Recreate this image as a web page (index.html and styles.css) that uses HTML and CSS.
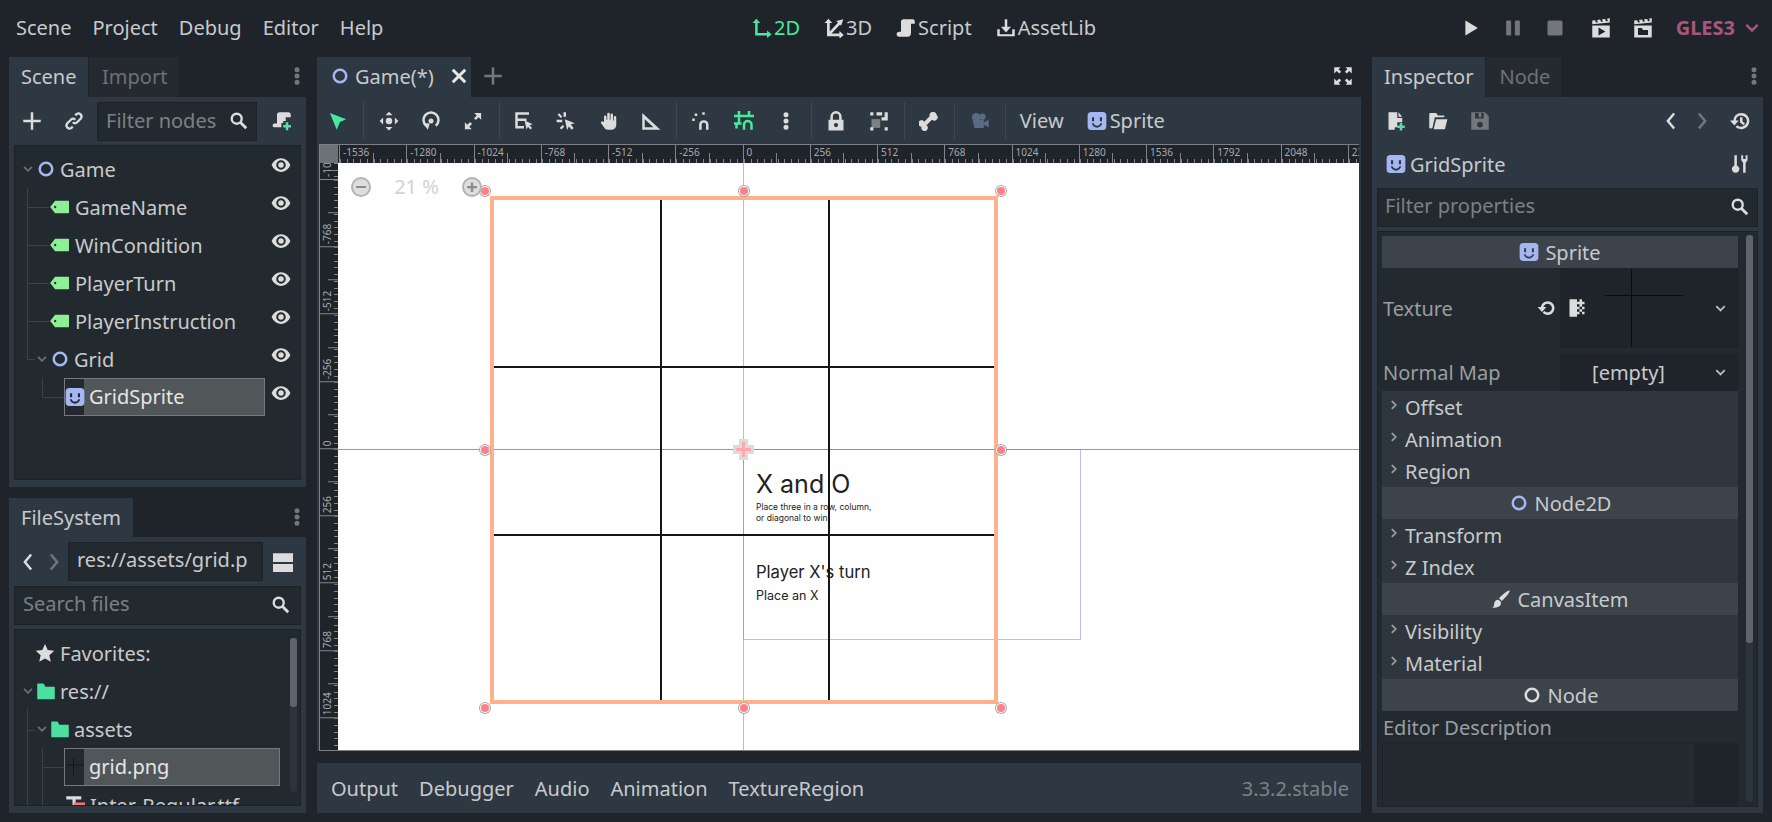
FILE: index.html
```html
<!DOCTYPE html>
<html lang="en">
<head>
  <meta charset="UTF-8">
  <title>Godot Engine - Game</title>
  <link rel="stylesheet" href="styles.css">
</head>
<body>

  <!-- icon set -->
  <svg class="sprites" xmlns="http://www.w3.org/2000/svg">
    <symbol id="eye" viewBox="0 0 16 16"><path fill-rule="evenodd" d="M8 2.500C4.500 2.500 1.700 5 .5 8c1.200 3 4 5.500 7.500 5.500s6.300-2.500 7.500-5.500C14.300 5 11.500 2.500 8 2.500zm0 1.700a3.800 3.800 0 110 7.600 3.800 3.800 0 010-7.600z"/><circle cx="8" cy="8" r="2.200"/></symbol>
    <symbol id="ring" viewBox="0 0 16 16"><circle cx="8" cy="8" r="5" fill="none" stroke="currentColor" stroke-width="2"/></symbol>
    <symbol id="tag" viewBox="0 0 16 16"><path fill-rule="evenodd" d="M.5 8L4.500 3H15a.6.6 0 01.6.6v8.800a.6.6 0 01-.6.6H4.500zM5 7.200a.9.9 0 100 1.600.9.9 0 000-1.600z"/></symbol>
    <symbol id="sprite" viewBox="0 0 16 16"><path fill-rule="evenodd" d="M3.500.8h9a3 3 0 013 3v8.400a3 3 0 01-3 3h-9a3 3 0 01-3-3V3.800a3 3 0 013-3zM4 5v3.200h1.700V5zm6.300 0v3.200H12V5zM3.800 10c.8 2.200 2.300 3.300 4.200 3.300s3.400-1.100 4.200-3.300l-1.300-.4C10.300 11 9.300 11.800 8 11.800S5.700 11 5.100 9.600z"/></symbol>
    <symbol id="folder" viewBox="0 0 16 16"><path d="M1.500 2H6l1.500 2.500h7a.5.5 0 01.5.5v9a.5.5 0 01-.5.5h-13A.5.5 0 011 14V2.500a.5.5 0 01.5-.5z"/></symbol>
    <symbol id="down" viewBox="0 0 16 16"><path d="M3.500 5.500L8 10l4.500-4.500" fill="none" stroke="currentColor" stroke-width="2"/></symbol>
    <symbol id="right" viewBox="0 0 16 16"><path d="M5.500 3.500L10 8l-4.500 4.500" fill="none" stroke="currentColor" stroke-width="2"/></symbol>
    <symbol id="back" viewBox="0 0 16 16"><path d="M10.500 2L5.500 8l5 6" fill="none" stroke="currentColor" stroke-width="2"/></symbol>
    <symbol id="forward" viewBox="0 0 16 16"><path d="M5.500 2l5 6-5 6" fill="none" stroke="currentColor" stroke-width="2"/></symbol>
    <symbol id="search" viewBox="0 0 16 16"><circle cx="6.500" cy="6.500" r="4.200" fill="none" stroke="currentColor" stroke-width="2"/><path d="M9.500 9.500L14.500 14.500" stroke="currentColor" stroke-width="2.400"/></symbol>
    <symbol id="plus" viewBox="0 0 16 16"><path d="M7 1h2v6h6v2H9v6H7V9H1V7h6z"/></symbol>
    <symbol id="link" viewBox="0 0 16 16"><path d="M9 3.500l1-1a2.500 2.500 0 013.500 3.500l-3 3a2.500 2.500 0 01-3.500 0M7 12.500l-1 1A2.500 2.500 0 012.500 10l3-3A2.500 2.500 0 019 7" fill="none" stroke="currentColor" stroke-width="1.800"/></symbol>
    <symbol id="instance" viewBox="0 0 16 16"><path d="M6 1h7a2 2 0 012 2v2h-4v3H9v1.500H7.500V13H2a1.500 1.500 0 010-3h2V3a2 2 0 012-2z"/><path fill="#57e0a0" d="M11 9h2v2.200h2.200v2H13v2.200h-2v-2.200H9v-2h2z"/></symbol>
    <symbol id="dots" viewBox="0 0 16 16"><circle cx="8" cy="3" r="2"/><circle cx="8" cy="8" r="2"/><circle cx="8" cy="13" r="2"/></symbol>
    <symbol id="cross" viewBox="0 0 16 16"><path d="M3 3l10 10M13 3L3 13" stroke="currentColor" stroke-width="2.400"/></symbol>
    <symbol id="star" viewBox="0 0 16 16"><path d="M8 .8l2.200 4.800 5.200.6-3.900 3.500 1.100 5.200L8 12.300 3.400 14.900l1.100-5.200L.6 6.200l5.200-.6z"/></symbol>
    <symbol id="split" viewBox="0 0 16 16"><path d="M0 1h16v7H0zM0 9.500h16V16H0z"/></symbol>
    <symbol id="axes2d" viewBox="0 0 16 16"><path d="M3.500.5L.4 4h2.100v10H12v2l3.600-3L12 10v2H4.500V4h2.100z"/></symbol>
    <symbol id="axes3d" viewBox="0 0 16 16"><path d="M3.500 3v10.500h9.500M3.500 13.500L12.500 4" fill="none" stroke="currentColor" stroke-width="2.200"/><path d="M3.500.5L.4 4h6.200zM15.500 1L9.800 2.300l3.900 3.900zM15.800 13.500L12.300 10.400v6.200z"/></symbol>
    <symbol id="script" viewBox="0 0 16 16"><path d="M6 1h7.500c1 0 1.500.8 1.500 1.800v1.700h-3V12c0 1.700-1 3-2.500 3H2.500C1.200 15 .5 14 .5 13c0-1.200.8-2 2-2H4V3c0-1.200.8-2 2-2z"/></symbol>
    <symbol id="assetlib" viewBox="0 0 16 16"><path d="M7 1h2v6h3l-4 4.500L4 7h3zM1 9h2v4h10V9h2v5.500H1z"/></symbol>
    <symbol id="play" viewBox="0 0 16 16"><path d="M3.500 2v12l10-6z"/></symbol>
    <symbol id="pause" viewBox="0 0 16 16"><rect x="2.500" y="2" width="4" height="12" rx="1"/><rect x="9.500" y="2" width="4" height="12" rx="1"/></symbol>
    <symbol id="stop" viewBox="0 0 16 16"><rect x="2" y="2" width="12" height="12" rx="1.500"/></symbol>
    <symbol id="clap-play" viewBox="0 0 16 16"><path fill-rule="evenodd" d="M1 2l2.300-.3.700 1.800 1.500-.2-.7-1.800 2.500-.3.700 1.800 1.500-.2-.7-1.800 2.500-.3.700 1.800 1.500-.2-.7-1.800L15 0v3.500L1 5zM1 6h14v9.500H1zm5 1.500v6.500l5.500-3.200z"/></symbol>
    <symbol id="clap-scene" viewBox="0 0 16 16"><path fill-rule="evenodd" d="M1 2l2.300-.3.700 1.800 1.500-.2-.7-1.800 2.500-.3.700 1.800 1.500-.2-.7-1.800 2.500-.3.700 1.800 1.500-.2-.7-1.800L15 0v3.500L1 5zM1 6h14v9.500H1zm3 2v5.500h8V9.500H8L7 8z"/></symbol>
    <symbol id="cursor" viewBox="0 0 16 16"><path d="M1.500 1.500l13 5-5 2.200L7 15z"/></symbol>
    <symbol id="move" viewBox="0 0 16 16"><path d="M8 .5l2.800 2.800H5.200zM8 15.500l-2.800-2.800h5.600zM.5 8l2.800-2.800v5.600zM15.500 8l-2.800 2.800V5.200z"/><circle cx="8" cy="8" r="2.600"/></symbol>
    <symbol id="rotate" viewBox="0 0 16 16"><path d="M4.200 11.800a6 6 0 117.600 0" fill="none" stroke="currentColor" stroke-width="2"/><path d="M1.500 9.500l5.500.5-1.500 5z"/><circle cx="8" cy="8" r="2"/></symbol>
    <symbol id="scale" viewBox="0 0 16 16"><path d="M1.500 9v5.500H7l-2-2 2.200-2.200-1.500-1.500L3.500 11zM14.500 7V1.500H9l2 2-2.200 2.200 1.500 1.500L12.500 5z"/></symbol>
    <symbol id="list" viewBox="0 0 16 16"><path d="M1 1h11v2H3v3h7v2H3v4h5v2H1z"/><path d="M8.500 7.500l6.500 3-2.600.8 2 2.200-1.300 1.200-1.900-2.200-1.200 2.300z"/></symbol>
    <symbol id="pivot" viewBox="0 0 16 16"><path d="M.5 7h4.500v2H.5zM6 1h2v3.500H6zM2.500 1.800l2.500 2.500L3.800 5.500 1.300 3zM5.500 11l-2.500 2.500 1.300 1.200L6.500 12.500z"/><path d="M7 6.500l8 3.300-3.200 1 2.300 2.700-1.600 1.500-2.200-2.700-1.400 2.800z"/></symbol>
    <symbol id="hand" viewBox="0 0 16 16"><path d="M4 8.500V4.500a1 1 0 012 0V7h.6V2.300a1 1 0 012 0V7h.6V3a1 1 0 012 0v4.500h.6V5a1 1 0 012 0v6c0 2.300-1.500 4-3.800 4H7c-1.500 0-2.300-.7-3-2L1.700 9.800a1 1 0 011.500-1.300z"/></symbol>
    <symbol id="ruler" viewBox="0 0 16 16"><path fill-rule="evenodd" d="M1 1.500L15.500 15H1zM3 6.500V13h7z"/></symbol>
    <symbol id="snap" viewBox="0 0 16 16"><path d="M6.500 15v-4.500a3.800 3.800 0 017.500 0V15h-2v-4.500a1.800 1.800 0 00-3.500 0V15zM1 6h2v2H1zM3 2h2v2H3zM9 1h2v2H9z"/></symbol>
    <symbol id="gridsnap" viewBox="0 0 16 16"><path d="M3 0h2v3h6V0h2v3h3v2H0V3h3zM0 9h6v2H3v3H1v-3H0zM7 15v-4a4 4 0 018 0v4h-2v-4a2 2 0 00-4 0v4z"/><path d="M3 5h2v5H3z"/></symbol>
    <symbol id="lock" viewBox="0 0 16 16"><path fill-rule="evenodd" d="M8 0a4.500 4.500 0 00-4.500 4.500V7H2v8.500h12V7h-1.500V4.500A4.500 4.500 0 008 0zm0 2a2.500 2.500 0 012.500 2.500V7h-5V4.500A2.500 2.500 0 018 2zm0 7.500a1.700 1.700 0 110 3.400 1.700 1.700 0 010-3.400z"/></symbol>
    <symbol id="group" viewBox="0 0 16 16"><path opacity=".45" d="M2 6.500h7v7H2z"/><path d="M1 1h2.500v2.500H1zM12.500 1H15v6.500h-5V5h2.500zM1 13h2.500v2.500H1zM12.500 13H15v2.500h-2.500zM6 1h4.500v2.500H6z"/></symbol>
    <symbol id="bone" viewBox="0 0 16 16"><path d="M11 .8a2.600 2.600 0 00-2.500 3.400L4.200 8.500A2.600 2.600 0 102 12.500a2.600 2.600 0 104-1.200l4.300-4.300A2.600 2.600 0 1014 3a2.600 2.600 0 00-3-2.200z"/></symbol>
    <symbol id="camera" viewBox="0 0 16 16"><circle cx="5" cy="5" r="3.500"/><circle cx="10" cy="4.500" r="2.500"/><path d="M2 7h9v6.500H3.500zM11 9l4-2v6l-4-2z"/></symbol>
    <symbol id="full" viewBox="0 0 16 16"><path d="M1 1h5L4.500 2.500l2 2L5 6 3 4 1 6zM15 1v5l-2-2-2 2-1.500-1.500 2-2L10 1zM1 15v-5l2 2 2-2 1.500 1.500-2 2L6 15zM15 15h-5l1.500-1.500-2-2L11 10l2 2 2-2z"/></symbol>
    <symbol id="doc-new" viewBox="0 0 16 16"><path d="M2 1h7v4.500h4V9H9v4H7v2H2zM10 1l3 3.500h-3z"/><path fill="#57e0a0" d="M11 9.500h2v2h2v2h-2v2h-2v-2H9v-2h2z"/></symbol>
    <symbol id="open" viewBox="0 0 16 16"><path fill-rule="evenodd" d="M2 1.500h4.500L8 3.500h5V5H5.500L3.500 13.500 2.500 14H2a1 1 0 01-1-1V2.500a1 1 0 011-1zM6.500 6.500H15.500L13.500 14.500H4.500z"/></symbol>
    <symbol id="save" viewBox="0 0 16 16"><path fill-rule="evenodd" d="M1.500 1H12l3 3v10.500a.5.5 0 01-.5.5h-13a.5.5 0 01-.5-.5v-13a.5.500 0 01.5-.5zM4 1.500V6h7V1.500H9V5H7V1.500zM8 8.500a2.300 2.300 0 100 4.600 2.300 2.300 0 000-4.600z"/></symbol>
    <symbol id="history" viewBox="0 0 16 16"><path d="M9 1.500a6.500 6.500 0 11-4.500 11.200l1.400-1.400A4.500 4.500 0 109 3.500 4.500 4.500 0 004.600 7.500H7l-3.500 4-3.500-4h2.600A6.500 6.500 0 019 1.500z"/><path d="M8 5h2v3.300l2 1.500-1.100 1.500L8 9.200z"/></symbol>
    <symbol id="tools" viewBox="0 0 16 16"><path d="M3.500 1h2v8.200a3 3 0 11-2 0zM9 1h1.500v3h2V1H14v4l-1.500 2v8H10.500V7L9 5z"/></symbol>
    <symbol id="revert" viewBox="0 0 16 16"><path d="M8.500 2.500a5.500 5.500 0 11-4 9.300l1.400-1.400A3.500 3.500 0 108.500 4.500a3.500 3.500 0 00-3.300 2.700h2.300l-3.500 4-3.500-4h2.600a5.500 5.500 0 015.400-4.700z"/></symbol>
    <symbol id="texture" viewBox="0 0 16 16"><path d="M2 1h6v2h2V1h2v2h2v2h-2v2h2v2h-2v2h2v2h-2v-2h-2v2H8v2H2zM8 5v2h2V5zm2 2v2H8v2h2V9h2V7zM5 11l2-3 1 3z"/></symbol>
    <symbol id="brush" viewBox="0 0 16 16"><path d="M15 1.200c.6.600-2.500 5-6.300 8.300L6.400 7.300C9.800 3.600 14.300.6 15 1.200zM5.500 8.500c1.500.2 2.500 1.300 2.500 2.700C8 13.400 6 15 1 15c1.500-1 1.500-2 1.500-3 0-2 1.500-3.500 3-3.500z"/></symbol>
    <symbol id="thumb" viewBox="0 0 16 16"><path d="M1 6h14v.6H1zM6.500 1h.6v14h-.6z"/></symbol>
    <symbol id="font" viewBox="0 0 16 16"><path d="M1 1h12v2.500H8.500V14H6V3.500H1z"/><path fill="#ff7070" d="M7 6h9v2.500h-3V16h-2.500V8.500H7z"/></symbol>
  </svg>

  <div class="editor">

    <header class="topbar">
      <nav class="menu">
        <span>Scene</span><span>Project</span><span>Debug</span><span>Editor</span><span>Help</span>
      </nav>
      <nav class="modes">
        <span class="mode active"><svg class="ic"><use href="#axes2d"/></svg>2D</span>
        <span class="mode"><svg class="ic"><use href="#axes3d"/></svg>3D</span>
        <span class="mode"><svg class="ic"><use href="#script"/></svg>Script</span>
        <span class="mode"><svg class="ic"><use href="#assetlib"/></svg>AssetLib</span>
      </nav>
      <div class="runbar">
        <svg class="ic"><use href="#play"/></svg>
        <svg class="ic dim"><use href="#pause"/></svg>
        <svg class="ic dim"><use href="#stop"/></svg>
        <svg class="ic clap-first"><use href="#clap-play"/></svg>
        <svg class="ic"><use href="#clap-scene"/></svg>
        <span class="driver">GLES3</span>
        <svg class="ic driver-arrow"><use href="#down"/></svg>
      </div>
    </header>

    <main class="workspace">

      <!-- left docks -->
      <section class="column-left">
        <div class="tabs">
          <span class="tab active tab-scene">Scene</span>
          <span class="tab tab-import">Import</span>
          <svg class="ic tab-dots"><use href="#dots"/></svg>
        </div>
        <div class="panel scene-panel">
          <div class="dock-tools">
            <svg class="ic tool-add"><use href="#plus"/></svg>
            <svg class="ic tool-link"><use href="#link"/></svg>
            <div class="input filter-nodes"><span>Filter nodes</span><svg class="ic"><use href="#search"/></svg></div>
            <svg class="ic tool-inst"><use href="#instance"/></svg>
          </div>
          <div class="tree scene-tree">
            <i class="guide guide-v1"></i>
            <i class="guide guide-h1"></i>
            <i class="guide guide-h2"></i>
            <i class="guide guide-h3"></i>
            <i class="guide guide-h4"></i>
            <i class="guide guide-h5"></i>
            <i class="guide guide-v2"></i>
            <i class="guide guide-h6"></i>
            <div class="row d0"><svg class="ic arrow"><use href="#down"/></svg><svg class="ic blue"><use href="#ring"/></svg><span>Game</span><svg class="ic eye"><use href="#eye"/></svg></div>
            <div class="row d1"><svg class="ic tag"><use href="#tag"/></svg><span>GameName</span><svg class="ic eye"><use href="#eye"/></svg></div>
            <div class="row d1"><svg class="ic tag"><use href="#tag"/></svg><span>WinCondition</span><svg class="ic eye"><use href="#eye"/></svg></div>
            <div class="row d1"><svg class="ic tag"><use href="#tag"/></svg><span>PlayerTurn</span><svg class="ic eye"><use href="#eye"/></svg></div>
            <div class="row d1"><svg class="ic tag"><use href="#tag"/></svg><span>PlayerInstruction</span><svg class="ic eye"><use href="#eye"/></svg></div>
            <div class="row d1 parent"><svg class="ic arrow"><use href="#down"/></svg><svg class="ic blue"><use href="#ring"/></svg><span>Grid</span><svg class="ic eye"><use href="#eye"/></svg></div>
            <div class="row d2"><div class="selected"><span class="sel-icon"><svg class="ic blue"><use href="#sprite"/></svg></span><span class="sel-text">GridSprite</span></div><svg class="ic eye"><use href="#eye"/></svg></div>
          </div>
        </div>

        <div class="tabs tabs-second">
          <span class="tab active tab-fs">FileSystem</span>
          <svg class="ic tab-dots"><use href="#dots"/></svg>
        </div>
        <div class="panel fs-panel">
          <div class="dock-tools fs-tools">
            <svg class="ic nav-back"><use href="#back"/></svg>
            <svg class="ic nav-fwd dim"><use href="#forward"/></svg>
            <div class="input path"><span>res://assets/grid.p</span></div>
            <svg class="ic split"><use href="#split"/></svg>
          </div>
          <div class="input search-files"><span>Search files</span><svg class="ic"><use href="#search"/></svg></div>
          <div class="tree fs-tree">
            <i class="guide fs-v1"></i>
            <i class="guide fs-h1"></i>
            <i class="guide fs-v2"></i>
            <i class="guide fs-h2"></i>
            <i class="guide fs-h3"></i>
            <div class="scroll"><b></b></div>
            <div class="row d0 fav"><svg class="ic"><use href="#star"/></svg><span>Favorites:</span></div>
            <div class="row d0"><svg class="ic arrow"><use href="#down"/></svg><svg class="ic folder"><use href="#folder"/></svg><span>res://</span></div>
            <div class="row d1 parent"><svg class="ic arrow"><use href="#down"/></svg><svg class="ic folder"><use href="#folder"/></svg><span>assets</span></div>
            <div class="row d2"><div class="selected wide"><span class="sel-icon"><svg class="ic thumb"><use href="#thumb"/></svg></span><span class="sel-text">grid.png</span></div></div>
            <div class="row d2 file"><svg class="ic"><use href="#font"/></svg><span>Inter-Regular.ttf</span></div>
          </div>
        </div>
      </section>

      <!-- main screen -->
      <section class="column-center">
        <div class="tabs scene-tabs">
          <span class="tab active tab-game"><svg class="ic blue"><use href="#ring"/></svg><span>Game(*)</span><svg class="ic close"><use href="#cross"/></svg></span>
          <svg class="ic add-tab"><use href="#plus"/></svg>
          <svg class="ic fullscreen"><use href="#full"/></svg>
        </div>
        <div class="panel main-panel">
          <div class="canvas-tools">
            <span class="btn on"><svg class="ic"><use href="#cursor"/></svg></span>
            <i class="sep"></i>
            <span class="btn"><svg class="ic"><use href="#move"/></svg></span>
            <span class="btn"><svg class="ic"><use href="#rotate"/></svg></span>
            <span class="btn"><svg class="ic"><use href="#scale"/></svg></span>
            <i class="sep"></i>
            <span class="btn"><svg class="ic"><use href="#list"/></svg></span>
            <span class="btn"><svg class="ic"><use href="#pivot"/></svg></span>
            <span class="btn"><svg class="ic"><use href="#hand"/></svg></span>
            <span class="btn"><svg class="ic"><use href="#ruler"/></svg></span>
            <i class="sep"></i>
            <span class="btn"><svg class="ic"><use href="#snap"/></svg></span>
            <span class="btn on"><svg class="ic"><use href="#gridsnap"/></svg></span>
            <span class="btn"><svg class="ic"><use href="#dots"/></svg></span>
            <i class="sep"></i>
            <span class="btn"><svg class="ic"><use href="#lock"/></svg></span>
            <span class="btn"><svg class="ic"><use href="#group"/></svg></span>
            <i class="sep"></i>
            <span class="btn"><svg class="ic"><use href="#bone"/></svg></span>
            <i class="sep"></i>
            <span class="btn cam"><svg class="ic"><use href="#camera"/></svg></span>
            <i class="sep"></i>
            <span class="text-btn view">View</span>
            <span class="text-btn sprite-btn"><svg class="ic blue"><use href="#sprite"/></svg>Sprite</span>
          </div>

          <div class="viewport">
            <div class="ruler-row">
              <div class="ruler-corner"></div>
              <div class="ruler-top">
                <span>-1536</span><span>-1280</span><span>-1024</span><span>-768</span><span>-512</span><span>-256</span><span>0</span><span>256</span><span>512</span><span>768</span><span>1024</span><span>1280</span><span>1536</span><span>1792</span><span>2048</span><span>2304</span>
              </div>
            </div>
            <div class="canvas-row">
              <div class="ruler-left">
                <span class="cut">-1024</span><span>-768</span><span>-512</span><span>-256</span><span>0</span><span>256</span><span>512</span><span>768</span><span>1024</span><span>1280</span>
              </div>
              <div class="canvas">
                <i class="axis-x"></i>
                <i class="axis-y"></i>
                <i class="axis-y-mix"></i>
                <i class="axis-x-mix"></i>
                <div class="label-frame"></div>

                <div class="game-text">
                  <div class="t-title">X and O</div>
                  <div class="t-small">Place three in a row, column,<br>or diagonal to win</div>
                  <div class="t-turn">Player X's turn</div>
                  <div class="t-place">Place an X</div>
                </div>

                <div class="grid-sprite">
                  <i class="line v1"></i><i class="line v2"></i>
                  <i class="line h1"></i><i class="line h2"></i>
                </div>

                <i class="handle hl vt"></i><i class="handle hc vt"></i><i class="handle hr vt"></i>
                <i class="handle hl vm"></i><i class="handle hr vm"></i>
                <i class="handle hl vb"></i><i class="handle hc vb"></i><i class="handle hr vb"></i>
                <div class="pivot-mark"></div>

                <div class="zoom-widget">
                  <span class="zoom-btn">&minus;</span>
                  <span class="zoom-val">21 %</span>
                  <span class="zoom-btn">+</span>
                </div>
              </div>
            </div>
          </div>
        </div>

        <footer class="bottom-panel">
          <span>Output</span><span>Debugger</span><span>Audio</span><span>Animation</span><span>TextureRegion</span>
          <em>3.3.2.stable</em>
        </footer>
      </section>

      <!-- inspector -->
      <section class="column-right">
        <div class="tabs">
          <span class="tab active tab-inspector">Inspector</span>
          <span class="tab tab-node">Node</span>
          <svg class="ic tab-dots"><use href="#dots"/></svg>
        </div>
        <div class="panel inspector-panel">
          <div class="insp-tools">
            <svg class="ic"><use href="#doc-new"/></svg>
            <svg class="ic"><use href="#open"/></svg>
            <svg class="ic dim"><use href="#save"/></svg>
            <svg class="ic push"><use href="#back"/></svg>
            <svg class="ic dim"><use href="#forward"/></svg>
            <svg class="ic"><use href="#history"/></svg>
          </div>
          <div class="insp-object">
            <svg class="ic blue"><use href="#sprite"/></svg>
            <span>GridSprite</span>
            <svg class="ic tools"><use href="#tools"/></svg>
          </div>
          <div class="input filter-props"><span>Filter properties</span><svg class="ic"><use href="#search"/></svg></div>
          <div class="insp-list">
            <div class="scroll insp-scroll"><b></b></div>
            <div class="cat"><svg class="ic blue"><use href="#sprite"/></svg>Sprite</div>
            <div class="prop prop-texture">
              <span class="prop-name">Texture</span>
              <svg class="ic revert"><use href="#revert"/></svg>
              <div class="prop-value">
                <svg class="ic tex-ic"><use href="#texture"/></svg>
                <i class="tex-v"></i><i class="tex-h"></i>
                <svg class="ic val-arrow"><use href="#down"/></svg>
              </div>
            </div>
            <div class="prop prop-normal">
              <span class="prop-name">Normal Map</span>
              <div class="prop-value">
                <span class="empty">[empty]</span>
                <svg class="ic val-arrow"><use href="#down"/></svg>
              </div>
            </div>
            <div class="sec"><svg class="ic"><use href="#right"/></svg>Offset</div>
            <div class="sec"><svg class="ic"><use href="#right"/></svg>Animation</div>
            <div class="sec"><svg class="ic"><use href="#right"/></svg>Region</div>
            <div class="cat"><svg class="ic blue"><use href="#ring"/></svg>Node2D</div>
            <div class="sec"><svg class="ic"><use href="#right"/></svg>Transform</div>
            <div class="sec"><svg class="ic"><use href="#right"/></svg>Z Index</div>
            <div class="cat"><svg class="ic"><use href="#brush"/></svg>CanvasItem</div>
            <div class="sec"><svg class="ic"><use href="#right"/></svg>Visibility</div>
            <div class="sec"><svg class="ic"><use href="#right"/></svg>Material</div>
            <div class="cat"><svg class="ic"><use href="#ring"/></svg>Node</div>
            <div class="prop-desc">Editor Description</div>
            <div class="desc-box"><div class="desc-side"></div></div>
          </div>
        </div>
      </section>

    </main>
  </div>

</body>
</html>
```

FILE: styles.css
```css
* {
  box-sizing: border-box;
}

html, body {
  margin: 0;
  height: 100%;
  overflow: hidden;
}

body {
  background-color: #1f242b;
  color: #c8cacc;
  font-family: "Noto Sans", sans-serif;
  font-size: 20px;
}

.sprites {
  display: none;
}

i {
  display: block;
}

.ic {
  width: 20px;
  height: 20px;
  fill: currentColor;
  color: #dcdcdc;
  flex: none;
}

.ic.dim {
  color: #73777b;
}

.ic.blue {
  color: #a5b7f3;
}

.ic.tag {
  color: #8eef97;
  width: 21px;
}

.ic.folder {
  color: #4be0a0;
}

.editor {
  height: 822px;
  display: flex;
  flex-direction: column;
}

/* Top bar */
.topbar {
  height: 57px;
  flex: none;
  display: flex;
  align-items: center;
  padding-bottom: 2px;
}

.menu {
  display: flex;
  gap: 21px;
  padding-left: 16px;
  width: 752px;
}

.modes {
  display: flex;
  gap: 24px;
}

.mode {
  display: flex;
  align-items: center;
  gap: 2px;
}

.mode.active, .mode.active .ic {
  color: #45ea9f;
}

.runbar {
  margin-left: auto;
  padding-right: 10px;
  display: flex;
  align-items: center;
  gap: 22px;
}

.clap-first {
  margin-left: 4px;
}

.driver {
  color: #a8567f;
  font-weight: 700;
  margin-left: 1px;
  margin-right: -15px;
}

.ic.driver-arrow {
  color: #a8567f;
}

/* Columns */
.workspace {
  flex: 1;
  display: flex;
  padding: 0 9px 9px;
  gap: 11px;
  min-height: 0;
}

.column-left {
  width: 297px;
  flex: none;
  display: flex;
  flex-direction: column;
}

.column-center {
  width: 1044px;
  flex: none;
  display: flex;
  flex-direction: column;
}

.column-right {
  width: 391px;
  flex: none;
  display: flex;
  flex-direction: column;
}

/* Tabs */
.tabs {
  height: 40px;
  flex: none;
  display: flex;
  position: relative;
}

.tabs-second {
  margin-top: 11px;
  height: 39px;
}

.tab {
  height: 100%;
  padding: 0 12px 2px;
  display: flex;
  align-items: center;
  background-color: #252a30;
  color: #6d7175;
  margin-right: 1px;
}

.tab.active {
  background-color: #2e3842;
  color: #c8cacc;
}

.tab-fs {
  padding-bottom: 0;
}

.tab-import {
  padding-left: 13px;
  width: 90px;
}

.tab-scene {
  width: 79px;
}

.tab-node {
  padding-left: 13px;
  width: 75px;
}

.tab-dots {
  position: absolute;
  right: -1px;
  top: 9px;
  color: #73777b;
}

.panel {
  background-color: #2e3842;
}

.input {
  background-color: #232a2f;
  border: 1px solid #1d2228;
  display: flex;
  align-items: center;
  color: #7c8084;
  padding-left: 8px;
  padding-bottom: 2px;
}

.input .ic {
  margin-left: auto;
  width: 19px;
  height: 19px;
}

/* Scene dock */
.scene-panel {
  height: 390px;
  padding: 0 5px;
  flex: none;
}

.dock-tools {
  height: 48px;
  display: flex;
  align-items: center;
}

.tool-add {
  margin-left: 8px;
}

.tool-link {
  margin-left: 22px;
}

.filter-nodes {
  width: 160px;
  height: 39px;
  margin-left: 13px;
  padding-right: 8px;
}

.tool-inst {
  margin-left: 15px;
}

.tree {
  background-color: #232a2f;
  border: 1px solid #1d2228;
  position: relative;
  overflow: hidden;
}

.scene-tree {
  height: 335px;
  padding-top: 4px;
}

.row {
  height: 38px;
  display: flex;
  align-items: center;
  white-space: nowrap;
}

.row .arrow {
  color: #6c7074;
  width: 14px;
  height: 14px;
}

.row.d0 {
  padding-left: 6px;
}

.row.d0 .arrow {
  margin-right: 1px;
}

.row.d0 .arrow + .ic {
  margin-right: 4px;
}

.row.d1 {
  padding-left: 34px;
}

.row.d1 .tag {
  margin-right: 5px;
}

.row.d1.parent {
  padding-left: 20px;
}

.row.d1.parent .arrow {
  margin-right: 1px;
}

.row.d1.parent .arrow + .ic {
  margin-right: 4px;
}

.row.d2 {
  padding-left: 49px;
}

.eye {
  position: absolute;
  right: 9px;
  margin-top: -8px;
}

.row .ic.eye {
  width: 20px;
  height: 20px;
}

.selected {
  display: flex;
  height: 38px;
  width: 201px;
  border: 1px solid #75797c;
  background-color: #515659;
  color: #e6e6e6;
}

.selected.wide {
  width: 216px;
}

.sel-icon {
  width: 19px;
  background-color: #232a2f;
  display: flex;
  align-items: center;
  justify-content: center;
}

.sel-text {
  padding-left: 5px;
  line-height: 36px;
}

.thumb {
  color: #111;
}

.guide {
  position: absolute;
  background-color: #3a4149;
}

.guide-v1 { left: 12px; top: 42px; width: 1px; height: 171px; }
.guide-h1 { left: 12px; top: 61px; width: 22px; height: 1px; }
.guide-h2 { left: 12px; top: 99px; width: 22px; height: 1px; }
.guide-h3 { left: 12px; top: 137px; width: 22px; height: 1px; }
.guide-h4 { left: 12px; top: 175px; width: 22px; height: 1px; }
.guide-h5 { left: 12px; top: 213px; width: 8px; height: 1px; }
.guide-v2 { left: 27px; top: 232px; width: 1px; height: 19px; }
.guide-h6 { left: 27px; top: 251px; width: 22px; height: 1px; }

/* FileSystem dock */
.fs-panel {
  flex: 1;
  min-height: 0;
  padding: 0 5px 7px;
  display: flex;
  flex-direction: column;
}

.fs-tools {
  height: 49px;
  flex: none;
}

.nav-back {
  margin-left: 4px;
}

.nav-fwd {
  margin-left: 6px;
}

.path {
  width: 195px;
  height: 39px;
  margin-left: 4px;
  color: #c8cacc;
  padding-left: 8px;
  padding-bottom: 4px;
  overflow: hidden;
  white-space: nowrap;
}

.split {
  margin-left: 10px;
  width: 20px;
  height: 20px;
}

.search-files {
  height: 39px;
  flex: none;
  padding-right: 10px;
  padding-bottom: 4px;
}

.search-files .ic {
  margin-top: 2px;
}

.fs-tree {
  flex: 1;
  margin-top: 4px;
  padding-top: 4px;
}

.row.fav {
  padding-left: 20px;
}

.fav .ic {
  margin-right: 5px;
}

.row.file {
  padding-left: 50px;
}

.file .ic {
  margin-right: 5px;
}

.scroll {
  position: absolute;
  right: 3px;
  top: 8px;
  width: 7px;
  height: 154px;
  background-color: #2c333a;
  border-radius: 3px;
}

.scroll b {
  display: block;
  height: 69px;
  background-color: #5d6368;
  border-radius: 3px;
}

.fs-v1 { left: 12px; top: 79px; width: 1px; height: 100px; }
.fs-h1 { left: 12px; top: 100px; width: 8px; height: 1px; }
.fs-v2 { left: 27px; top: 118px; width: 1px; height: 60px; }
.fs-h2 { left: 27px; top: 137px; width: 22px; height: 1px; }
.fs-h3 { left: 27px; top: 175px; width: 22px; height: 1px; }

/* Center */
.scene-tabs {
  align-items: stretch;
}

.tab-game {
  width: 154px;
  padding-left: 13px;
  gap: 5px;
  margin-right: 0;
}

.close {
  margin-left: 10px;
  color: #e8e8e8;
}

.add-tab {
  align-self: center;
  margin-left: 12px;
  margin-top: -2px;
  color: #73777b;
}

.fullscreen {
  align-self: center;
  margin-left: auto;
  margin-right: 8px;
  margin-top: -2px;
}

.main-panel {
  height: 654px;
  flex: none;
}

.canvas-tools {
  height: 47px;
  display: flex;
  align-items: center;
}

.btn {
  width: 42.4px;
  display: flex;
  justify-content: center;
}

.btn.on .ic {
  color: #45ea9f;
}

.btn.cam .ic {
  color: #5a6a85;
}

.sep {
  width: 1px;
  height: 38px;
  background-color: #3d4750;
  margin: 0 3px 0 4px;
}

.text-btn {
  display: flex;
  align-items: center;
  gap: 3px;
}

.view {
  margin-left: 11px;
}

.sprite-btn {
  margin-left: 23px;
}

.viewport {
  margin: 0 2px;
  height: 607px;
  border-top: 1px solid #7c8084;
  border-left: 1px solid #7c8084;
  border-bottom: 1px solid #7c8084;
}

.ruler-row {
  height: 18px;
  display: flex;
}

.ruler-corner {
  width: 18px;
  background-color: #6e7378;
}

.ruler-top {
  flex: 1;
  display: flex;
  overflow: hidden;
  background-color: #1f242b;
  padding-left: 1px;
}

.ruler-top span {
  flex: 0 0 67.25px;
  border-left: 1px solid #82868a;
  padding-left: 3px;
  font-size: 10px;
  line-height: 15px;
  color: #a6aaae;
  background-image: repeating-linear-gradient(90deg, #82868a 0 1px, transparent 1px 6.725px), linear-gradient(#82868a, #82868a);
  background-size: 100% 4px, 1px 10px;
  background-position: 0 100%, 50% 100%;
  background-repeat: no-repeat;
}

.canvas-row {
  display: flex;
  height: 587px;
}

.ruler-left {
  width: 18px;
  flex: none;
  background-color: #1f242b;
  display: flex;
  flex-direction: column;
  overflow: hidden;
}

.ruler-left span {
  flex: 0 0 67.25px;
  writing-mode: vertical-rl;
  transform: rotate(180deg);
  font-size: 10px;
  line-height: 15px;
  color: #a6aaae;
  padding-top: 2px;
  background-image: repeating-linear-gradient(0deg, #82868a 0 1px, transparent 1px 6.725px), linear-gradient(#82868a, #82868a);
  background-size: 4px 100%, 10px 1px;
  background-position: 0 0, 0 50%;
  background-repeat: no-repeat;
  border-top: 1px solid #82868a;
}

.ruler-left .cut {
  flex: 0 0 17px;
  overflow: hidden;
}

.canvas {
  flex: 1;
  background-color: #fff;
  position: relative;
  overflow: hidden;
  font-family: Inter, sans-serif;
  color: #222;
}

.axis-x {
  position: absolute;
  left: 0;
  right: 0;
  top: 286px;
  height: 1px;
  background-color: #cf8088;
}

.axis-x-mix {
  position: absolute;
  left: 405px;
  width: 337px;
  top: 286px;
  height: 1px;
  background-color: #a884ac;
}

.axis-y {
  position: absolute;
  left: 405px;
  top: 0;
  bottom: 0;
  width: 1px;
  background-color: #a8d86e;
}

.axis-y-mix {
  position: absolute;
  left: 405px;
  top: 286px;
  height: 190px;
  width: 1px;
  background-color: #92ae8e;
}

.label-frame {
  position: absolute;
  left: 406px;
  top: 287px;
  width: 337px;
  height: 190px;
  border-right: 1px solid #bcbcf0;
  border-bottom: 1px solid #bcbcf0;
}

.game-text {
  position: absolute;
  left: 418px;
  top: 306px;
  white-space: nowrap;
}

.t-title {
  font-size: 25px;
  line-height: 30px;
}

.t-small {
  font-size: 8.5px;
  line-height: 11px;
  margin-top: 3px;
}

.t-turn {
  font-size: 16.6px;
  line-height: 22px;
  margin-top: 37px;
}

.t-place {
  font-size: 12.5px;
  line-height: 16px;
  margin-top: 5px;
}

.grid-sprite {
  position: absolute;
  left: 152px;
  top: 33px;
  width: 508px;
  height: 508px;
  border: 4px solid #ffb08d;
}

.line {
  position: absolute;
  background-color: #161616;
}

.line.v1 { left: 166px; top: 0; bottom: 0; width: 2px; }
.line.v2 { left: 334px; top: 0; bottom: 0; width: 2px; }
.line.h1 { top: 166px; left: 0; right: 0; height: 2px; }
.line.h2 { top: 334px; left: 0; right: 0; height: 2px; }

.handle {
  position: absolute;
  width: 8px;
  height: 8px;
  margin: -4px 0 0 -4px;
  border-radius: 50%;
  background-color: #ff8088;
  box-shadow: 0 0 0 1px #fff, 0 0 0 2px #a8a8a8;
}

.hl { left: 147px; }
.hc { left: 405.5px; }
.hr { left: 662.5px; }
.vt { top: 28px; }
.vm { top: 286.5px; }
.vb { top: 544.5px; }

.pivot-mark {
  position: absolute;
  left: 395px;
  top: 276px;
  width: 21px;
  height: 21px;
  background:
    linear-gradient(#ffa8ae, #ffa8ae) 50% 50% / 15px 3px no-repeat,
    linear-gradient(#ffa8ae, #ffa8ae) 50% 50% / 3px 15px no-repeat,
    linear-gradient(#dcdcdc, #dcdcdc) 50% 50% / 21px 9px no-repeat,
    linear-gradient(#dcdcdc, #dcdcdc) 50% 50% / 9px 21px no-repeat;
}

.zoom-widget {
  position: absolute;
  left: 13px;
  top: 14px;
  display: flex;
  align-items: center;
  font-family: "Noto Sans", sans-serif;
  transform: translateY(-4px);
}

.zoom-btn {
  width: 20px;
  height: 20px;
  border-radius: 50%;
  background-color: #dedede;
  border: 2px solid #b4b4b4;
  color: #8a8a8a;
  font-weight: 700;
  font-size: 20px;
  line-height: 15px;
  text-align: center;
}

.zoom-val {
  width: 91px;
  text-align: center;
  color: #d2d2d2;
}

/* Bottom panel */
.bottom-panel {
  margin-top: 12px;
  flex: 1;
  background-color: #2e3842;
  display: flex;
  align-items: center;
  gap: 21px;
  padding: 0 12px 0 14px;
}

.bottom-panel em {
  margin-left: auto;
  font-style: normal;
  color: #7d8185;
}

/* Inspector */
.inspector-panel {
  flex: 1;
  min-height: 0;
  padding: 0 5px 6px;
  display: flex;
  flex-direction: column;
}

.insp-tools {
  height: 48px;
  display: flex;
  align-items: center;
  flex: none;
  gap: 22px;
  padding: 0 8px 0 9px;
}

.insp-tools .push {
  margin-left: auto;
}

.insp-tools .push + .ic {
  margin-left: -11px;
}

.insp-tools .ic:last-child {
  margin-left: -4px;
}

.insp-object {
  height: 38px;
  flex: none;
  display: flex;
  align-items: center;
  gap: 4px;
  padding: 0 8px 0 9px;
}

.insp-object .tools {
  margin-left: auto;
}

.filter-props {
  height: 39px;
  flex: none;
  margin-top: 5px;
  padding-left: 7px;
  padding-right: 8px;
  padding-bottom: 4px;
}

.filter-props .ic {
  margin-top: 2px;
}

.insp-list {
  flex: 1;
  min-height: 0;
  margin-top: 4px;
  background-color: #232a2f;
  border: 1px solid #1d2228;
  padding: 4px 19px 0 4px;
  position: relative;
  overflow: hidden;
}

.insp-scroll {
  right: 4px;
  top: 3px;
  height: 567px;
}

.insp-scroll b {
  height: 408px;
}

.cat {
  height: 32px;
  background-color: #3c434b;
  display: flex;
  align-items: center;
  justify-content: center;
  gap: 6px;
}

.prop {
  position: relative;
  display: flex;
  align-items: center;
}

.prop-name {
  padding-left: 1px;
  color: #9a9ea2;
}

.prop-texture {
  height: 80px;
}

.prop-normal {
  height: 43px;
  align-items: flex-end;
}

.prop-normal .prop-name {
  padding-bottom: 5px;
}

.revert {
  position: absolute;
  left: 155px;
}

.prop-value {
  position: absolute;
  left: 178px;
  right: 0;
  top: 0;
  bottom: 0;
  background-color: #1f242b;
  display: flex;
  align-items: center;
}

.prop-normal .prop-value {
  top: 5px;
}

.tex-ic {
  margin-left: 7px;
}

.tex-v {
  position: absolute;
  left: 71px;
  top: 1px;
  bottom: 1px;
  width: 1px;
  background-color: #0c0c0c;
}

.tex-h {
  position: absolute;
  left: 45px;
  top: 27px;
  width: 78px;
  height: 1px;
  background-color: #0c0c0c;
}

.val-arrow {
  position: absolute;
  right: 10px;
  width: 15px;
  height: 15px;
  color: #b8babc;
}

.empty {
  position: absolute;
  left: 0;
  right: 41px;
  text-align: center;
  white-space: nowrap;
}

.sec {
  height: 32px;
  background-color: #30363d;
  display: flex;
  align-items: center;
  padding-left: 5px;
  gap: 4px;
}

.sec .ic {
  width: 14px;
  height: 14px;
  color: #9a9ea2;
  margin-top: -4px;
}

.prop-desc {
  height: 32px;
  line-height: 34px;
  padding-left: 1px;
  color: #9a9ea2;
}

.desc-box {
  height: 64px;
  background-color: #252a30;
  border: 1px solid #1f242b;
  display: flex;
  justify-content: flex-end;
}

.desc-side {
  width: 43px;
  background-color: #1f242b;
}
```
